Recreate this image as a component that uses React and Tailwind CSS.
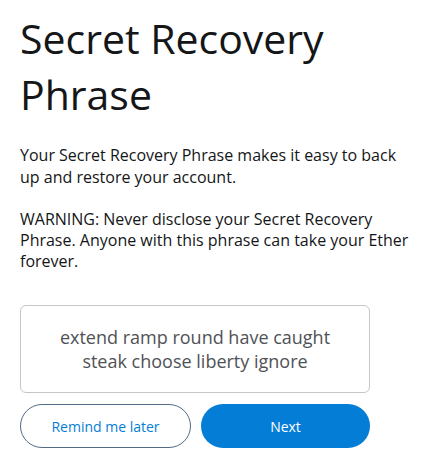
export default function App() {
  return (
    <div className="w-[424px] h-[461px] bg-white overflow-hidden px-5 pt-[10px]" style={{ fontFamily: '"Open Sans", sans-serif' }}>
      <h1 className="text-[41px] leading-[56px] text-[#141618] font-normal">Secret Recovery Phrase</h1>
      <p className="mt-[22px] text-[16px] leading-[22px] text-[#141618]">Your Secret Recovery Phrase makes it easy to back up and restore your account.</p>
      <p className="w-[400px] mt-[21px] text-[16px] leading-[21px] text-[#141618]">WARNING: Never disclose your Secret Recovery Phrase. Anyone with this phrase can take your Ether forever.</p>
      <div className="w-[350px] mt-[33px] h-[88px] border border-[#c4c6c9] rounded-[6px] flex items-center justify-center px-8 text-center text-[18px] leading-[24px] text-[#4f5256]">
        extend ramp round have caught steak choose liberty ignore
      </div>
      <div className="w-[350px] mt-[11px] flex gap-[10px]">
        <button className="flex-1 h-[44px] rounded-full border border-[#536a86] text-[#037dd6] text-[14px]">Remind me later</button>
        <button className="flex-1 h-[44px] rounded-full bg-[#037dd6] text-white text-[14px]">Next</button>
      </div>
    </div>
  );
}
